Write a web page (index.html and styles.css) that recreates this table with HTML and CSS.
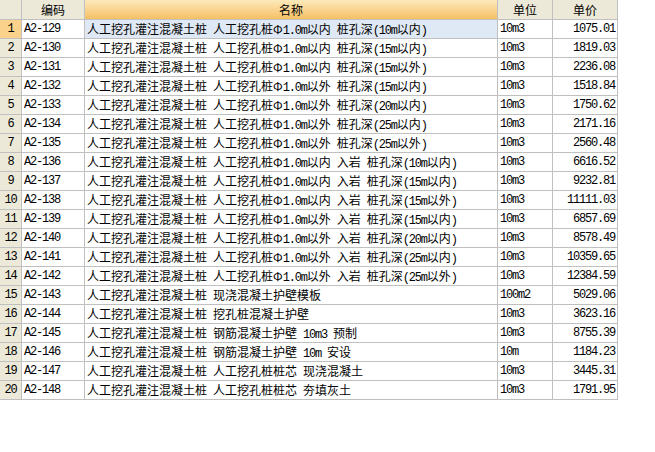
FILE: index.html
```html
<!DOCTYPE html>
<html lang="zh-CN">
<head>
<meta charset="utf-8">
<title>定额</title>
<link rel="stylesheet" href="styles.css">
</head>
<body>
<div class="grid">
  <div class="h hn"></div><div class="h">编码</div><div class="h hsel">名称</div><div class="h">单位</div><div class="h">单价</div>

  <div class="n nsel">1</div><div class="c m">A2-129</div><div class="c sel">人工挖孔灌注混凝土桩<span class="m"> </span>人工挖孔桩Φ<span class="m">1.0m</span>以内<span class="m"> </span>桩孔深<span class="m">(10m</span>以内<span class="m">)</span></div><div class="c m">10m3</div><div class="c m r">1075.01</div>
  <div class="n">2</div><div class="c m">A2-130</div><div class="c">人工挖孔灌注混凝土桩<span class="m"> </span>人工挖孔桩Φ<span class="m">1.0m</span>以内<span class="m"> </span>桩孔深<span class="m">(15m</span>以内<span class="m">)</span></div><div class="c m">10m3</div><div class="c m r">1819.03</div>
  <div class="n">3</div><div class="c m">A2-131</div><div class="c">人工挖孔灌注混凝土桩<span class="m"> </span>人工挖孔桩Φ<span class="m">1.0m</span>以内<span class="m"> </span>桩孔深<span class="m">(15m</span>以外<span class="m">)</span></div><div class="c m">10m3</div><div class="c m r">2236.08</div>
  <div class="n">4</div><div class="c m">A2-132</div><div class="c">人工挖孔灌注混凝土桩<span class="m"> </span>人工挖孔桩Φ<span class="m">1.0m</span>以外<span class="m"> </span>桩孔深<span class="m">(15m</span>以内<span class="m">)</span></div><div class="c m">10m3</div><div class="c m r">1518.84</div>
  <div class="n">5</div><div class="c m">A2-133</div><div class="c">人工挖孔灌注混凝土桩<span class="m"> </span>人工挖孔桩Φ<span class="m">1.0m</span>以外<span class="m"> </span>桩孔深<span class="m">(20m</span>以内<span class="m">)</span></div><div class="c m">10m3</div><div class="c m r">1750.62</div>
  <div class="n">6</div><div class="c m">A2-134</div><div class="c">人工挖孔灌注混凝土桩<span class="m"> </span>人工挖孔桩Φ<span class="m">1.0m</span>以外<span class="m"> </span>桩孔深<span class="m">(25m</span>以内<span class="m">)</span></div><div class="c m">10m3</div><div class="c m r">2171.16</div>
  <div class="n">7</div><div class="c m">A2-135</div><div class="c">人工挖孔灌注混凝土桩<span class="m"> </span>人工挖孔桩Φ<span class="m">1.0m</span>以外<span class="m"> </span>桩孔深<span class="m">(25m</span>以外<span class="m">)</span></div><div class="c m">10m3</div><div class="c m r">2560.48</div>
  <div class="n">8</div><div class="c m">A2-136</div><div class="c">人工挖孔灌注混凝土桩<span class="m"> </span>人工挖孔桩Φ<span class="m">1.0m</span>以内<span class="m"> </span>入岩<span class="m"> </span>桩孔深<span class="m">(10m</span>以内<span class="m">)</span></div><div class="c m">10m3</div><div class="c m r">6616.52</div>
  <div class="n">9</div><div class="c m">A2-137</div><div class="c">人工挖孔灌注混凝土桩<span class="m"> </span>人工挖孔桩Φ<span class="m">1.0m</span>以内<span class="m"> </span>入岩<span class="m"> </span>桩孔深<span class="m">(15m</span>以内<span class="m">)</span></div><div class="c m">10m3</div><div class="c m r">9232.81</div>
  <div class="n">10</div><div class="c m">A2-138</div><div class="c">人工挖孔灌注混凝土桩<span class="m"> </span>人工挖孔桩Φ<span class="m">1.0m</span>以内<span class="m"> </span>入岩<span class="m"> </span>桩孔深<span class="m">(15m</span>以外<span class="m">)</span></div><div class="c m">10m3</div><div class="c m r">11111.03</div>
  <div class="n">11</div><div class="c m">A2-139</div><div class="c">人工挖孔灌注混凝土桩<span class="m"> </span>人工挖孔桩Φ<span class="m">1.0m</span>以外<span class="m"> </span>入岩<span class="m"> </span>桩孔深<span class="m">(15m</span>以内<span class="m">)</span></div><div class="c m">10m3</div><div class="c m r">6857.69</div>
  <div class="n">12</div><div class="c m">A2-140</div><div class="c">人工挖孔灌注混凝土桩<span class="m"> </span>人工挖孔桩Φ<span class="m">1.0m</span>以外<span class="m"> </span>入岩<span class="m"> </span>桩孔深<span class="m">(20m</span>以内<span class="m">)</span></div><div class="c m">10m3</div><div class="c m r">8578.49</div>
  <div class="n">13</div><div class="c m">A2-141</div><div class="c">人工挖孔灌注混凝土桩<span class="m"> </span>人工挖孔桩Φ<span class="m">1.0m</span>以外<span class="m"> </span>入岩<span class="m"> </span>桩孔深<span class="m">(25m</span>以内<span class="m">)</span></div><div class="c m">10m3</div><div class="c m r">10359.65</div>
  <div class="n">14</div><div class="c m">A2-142</div><div class="c">人工挖孔灌注混凝土桩<span class="m"> </span>人工挖孔桩Φ<span class="m">1.0m</span>以外<span class="m"> </span>入岩<span class="m"> </span>桩孔深<span class="m">(25m</span>以外<span class="m">)</span></div><div class="c m">10m3</div><div class="c m r">12384.59</div>
  <div class="n">15</div><div class="c m">A2-143</div><div class="c">人工挖孔灌注混凝土桩<span class="m"> </span>现浇混凝土护壁模板</div><div class="c m">100m2</div><div class="c m r">5029.06</div>
  <div class="n">16</div><div class="c m">A2-144</div><div class="c">人工挖孔灌注混凝土桩<span class="m"> </span>挖孔桩混凝土护壁</div><div class="c m">10m3</div><div class="c m r">3623.16</div>
  <div class="n">17</div><div class="c m">A2-145</div><div class="c">人工挖孔灌注混凝土桩<span class="m"> </span>钢筋混凝土护壁<span class="m"> 10m3 </span>预制</div><div class="c m">10m3</div><div class="c m r">8755.39</div>
  <div class="n">18</div><div class="c m">A2-146</div><div class="c">人工挖孔灌注混凝土桩<span class="m"> </span>钢筋混凝土护壁<span class="m"> 10m </span>安设</div><div class="c m">10m</div><div class="c m r">1184.23</div>
  <div class="n">19</div><div class="c m">A2-147</div><div class="c">人工挖孔灌注混凝土桩<span class="m"> </span>人工挖孔桩桩芯<span class="m"> </span>现浇混凝土</div><div class="c m">10m3</div><div class="c m r">3445.31</div>
  <div class="n">20</div><div class="c m">A2-148</div><div class="c">人工挖孔灌注混凝土桩<span class="m"> </span>人工挖孔桩桩芯<span class="m"> </span>夯填灰土</div><div class="c m">10m3</div><div class="c m r">1791.95</div>
</div>
</body>
</html>
```

FILE: styles.css
```css
html, body {
  margin: 0;
  padding: 0;
  background: #ffffff;
}

body {
  font-family: "Noto Sans CJK SC", "Noto Sans", sans-serif;
  font-size: 12px;
  color: #000000;
}

.grid {
  display: grid;
  grid-template-columns: 22px 63px 413px 55px 65px;
  grid-template-rows: 20px;
  grid-auto-rows: 19px;
  width: 618px;
}

.grid > div {
  box-sizing: border-box;
  border-right: 1px solid #c0c0c0;
  border-bottom: 1px solid #c0c0c0;
  white-space: nowrap;
  overflow: hidden;
}

.h {
  background: #ece9d8;
  text-align: center;
  line-height: 19px;
}

.hsel {
  background: linear-gradient(#fde9bb, #f5c065);
}

.n {
  background: #ece9d8;
  text-align: center;
  line-height: 18px;
}

.nsel {
  background: #fbd28c;
}

.c {
  padding: 0 3px 0 2px;
  line-height: 18px;
}

.sel {
  background: #dfe8f5;
}

.m {
  font-family: "Liberation Mono", monospace;
  font-size: 12px;
  letter-spacing: -1.2px;
}

.n {
  font-family: "Liberation Mono", monospace;
  letter-spacing: -1.2px;
}

.r {
  text-align: right;
  padding-right: 2px;
}
```
